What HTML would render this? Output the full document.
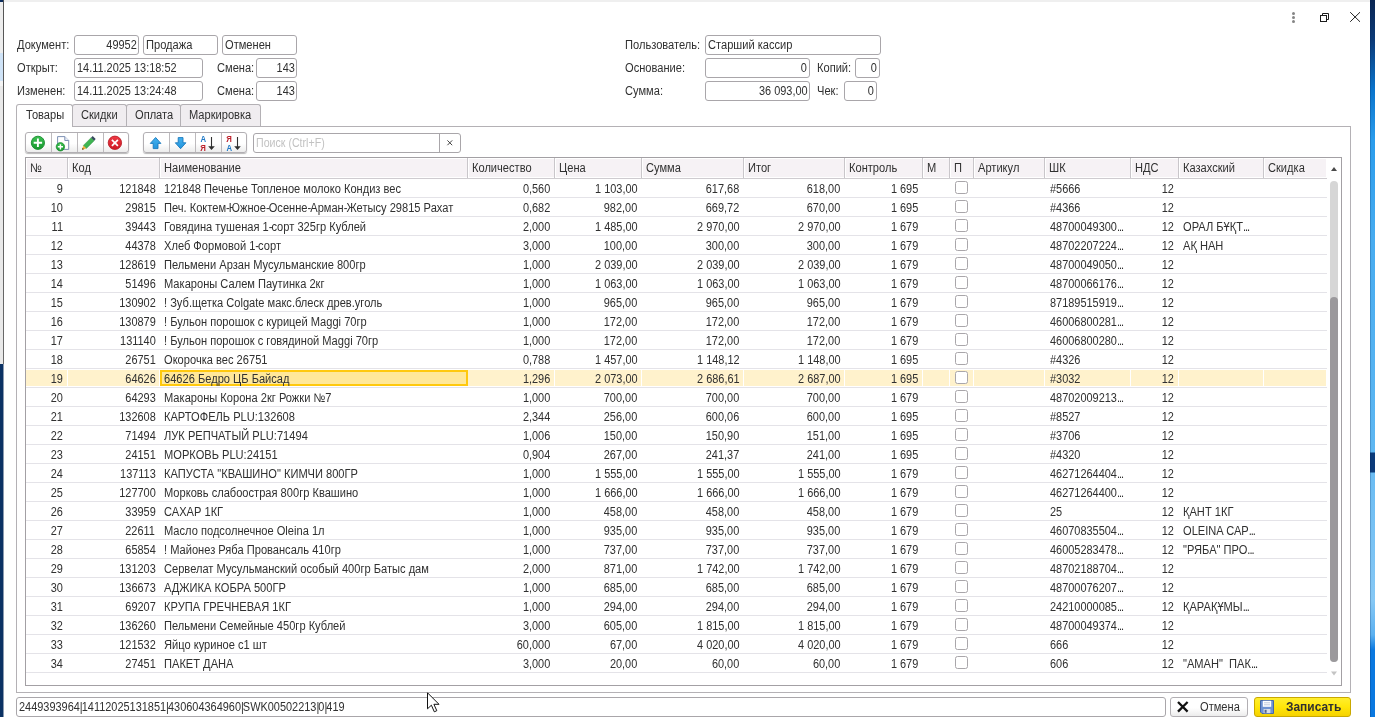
<!DOCTYPE html>
<html lang="ru"><head><meta charset="utf-8"><title>Документ 49952</title>
<style>
html,body{margin:0;padding:0;}
body{width:1375px;height:717px;overflow:hidden;background:#fff;position:relative;
 font-family:"Liberation Sans",sans-serif;font-size:12.5px;color:#303030;}
div,span,svg{position:absolute;box-sizing:border-box;}
.t{display:block;margin-top:0.8px;white-space:pre;line-height:19px;height:19px;transform:scaleX(0.888);}
.l{transform-origin:0 50%;}
.r{transform-origin:100% 50%;transform:scaleX(0.875);}
.inp{border:1px solid #a9a6aa;border-radius:3px;background:#fff;height:20px;}
.tab{top:104px;height:23px;border:1px solid #b4b1b5;border-bottom:none;border-radius:3px 3px 0 0;background:#f0edf0;}
.btng{top:132px;height:21px;border:1px solid #b2afb3;border-radius:3px;background:linear-gradient(#fff 0%,#fff 55%,#ececec 100%);box-shadow:0 1px 1px rgba(0,0,0,.28);}
.bdiv{top:0;width:1px;height:19px;background:#bdbabd;}
.hd{top:159px;height:18px;background:#f6f2f5;}
.hdv{top:158px;width:1px;height:20px;background:#c9c6ca;}
.rl{left:26px;width:1301px;height:1px;background:#e4e3e8;}
.cb{width:13px;height:13px;border:1px solid #a9a6aa;border-radius:2.5px;background:#fff;left:955px;}
.hl{height:16px;background:#fff2cc;}
.ph{color:#c2c2c2;}
.b{font-weight:bold;transform:scaleX(.955);}
.n{transform:scaleX(0.875);}
.e{position:static;letter-spacing:-1.2px;}
.p{position:static;letter-spacing:-1.1px;}
</style></head><body>
<div id="w" style="left:0;top:0;width:1375px;height:717px;will-change:transform">

<div style="left:0;top:0;width:1370px;height:2px;background:#efefef"></div>
<div style="left:0;top:0;width:4px;height:717px;background:linear-gradient(#0c2d5e 0,#0c2d5e 2px,#ededed 2px,#ededed 53px,#cfe3f7 53px,#cfe3f7 81px,#f4f4f4 81px,#f4f4f4 86px,#e9e9e9 86px,#e9e9e9 364px,#0b3264 364px,#0b3264 100%)"></div>
<div style="left:3px;top:0;width:1px;height:717px;background:linear-gradient(#555 0,#6a6a6a 364px,#8b9bb0 364px,#8b9bb0 100%)"></div>
<div style="left:1370px;top:0;width:5px;height:717px;background:linear-gradient(#0a2552 0,#0b3a78 40px,#0a74cc 90px,#2a9cec 140px,#48acf0 240px,#5eb7f2 452px,#0b3a7a 453px,#0b3a7a 472px,#6bbcf3 473px,#86c8f5 600px,#5bb0f0 635px,#0a78e0 650px,#0a78e0 100%)"></div>
<div style="left:1370px;top:0;width:1px;height:717px;background:rgba(0,30,80,.22)"></div>
<svg style="left:1285px;top:8px" width="85" height="20" viewBox="1285 8 85 20"><circle cx="1293.5" cy="13.4" r="1.5" fill="#858585"/><circle cx="1293.5" cy="17.4" r="1.5" fill="#858585"/><circle cx="1293.5" cy="21.4" r="1.5" fill="#858585"/><path d="M1322.5 15v-1.5h6v6h-1.5" fill="none" stroke="#1c1c1c" stroke-width="1"/><rect x="1320.5" y="15.5" width="6" height="6" fill="none" stroke="#1c1c1c" stroke-width="1"/><path d="M1350.2 12.2l9.8 9.6M1360 12.2l-9.8 9.6" stroke="#222" stroke-width="1" fill="none"/></svg>
<span class="t l " style="left:17px;top:35.2px;">Документ:</span>
<div class="inp" style="left:74px;top:35px;width:65px"></div>
<span class="t r " style="right:1238.6px;top:35.2px;">49952</span>
<div class="inp" style="left:143px;top:35px;width:75px"></div>
<span class="t l " style="left:146.2px;top:35.2px;">Продажа</span>
<div class="inp" style="left:222px;top:35px;width:75px"></div>
<span class="t l " style="left:225.2px;top:35.2px;">Отменен</span>
<span class="t l " style="left:17px;top:58.2px;">Открыт:</span>
<div class="inp" style="left:74px;top:58px;width:129px"></div>
<span class="t l n" style="left:77.2px;top:58.2px;">14.11.2025 13:18:52</span>
<span class="t l " style="left:216.6px;top:58.2px;">Смена:</span>
<div class="inp" style="left:256px;top:58px;width:41px"></div>
<span class="t r " style="right:1080.6px;top:58.2px;">143</span>
<span class="t l " style="left:17px;top:81.2px;">Изменен:</span>
<div class="inp" style="left:74px;top:81px;width:129px"></div>
<span class="t l n" style="left:77.2px;top:81.2px;">14.11.2025 13:24:48</span>
<span class="t l " style="left:216.6px;top:81.2px;">Смена:</span>
<div class="inp" style="left:256px;top:81px;width:41px"></div>
<span class="t r " style="right:1080.6px;top:81.2px;">143</span>
<span class="t l " style="left:625px;top:35.2px;">Пользователь:</span>
<div class="inp" style="left:705px;top:35px;width:176px"></div>
<span class="t l " style="left:708.2px;top:35.2px;">Старший кассир</span>
<span class="t l " style="left:625px;top:58.2px;">Основание:</span>
<div class="inp" style="left:705px;top:58px;width:105px"></div>
<span class="t r " style="right:567.6px;top:58.2px;">0</span>
<span class="t l " style="left:817px;top:58.2px;">Копий:</span>
<div class="inp" style="left:855px;top:58px;width:25px"></div>
<span class="t r " style="right:497.6px;top:58.2px;">0</span>
<span class="t l " style="left:625px;top:81.2px;">Сумма:</span>
<div class="inp" style="left:705px;top:81px;width:105px"></div>
<span class="t r " style="right:567.6px;top:81.2px;">36 093,00</span>
<span class="t l " style="left:817px;top:81.2px;">Чек:</span>
<div class="inp" style="left:844px;top:81px;width:33px"></div>
<span class="t r " style="right:500.6px;top:81.2px;">0</span>
<div style="left:16px;top:126px;width:1335px;height:567px;border:1px solid #b4b1b5;background:#fff"></div>
<div class="tab" style="left:72px;width:55px;height:22px"></div>
<span class="t l " style="left:81px;top:105.2px;">Скидки</span>
<div class="tab" style="left:126px;width:55px;height:22px"></div>
<span class="t l " style="left:135px;top:105.2px;">Оплата</span>
<div class="tab" style="left:180px;width:81px;height:22px"></div>
<span class="t l " style="left:189px;top:105.2px;">Маркировка</span>
<div class="tab" style="left:16px;width:57px;background:#fff;height:23px"></div>
<span class="t l " style="left:26px;top:105.2px;">Товары</span>
<div class="btng" style="left:25px;width:104px"><div class="bdiv" style="left:25px"></div><div class="bdiv" style="left:51px"></div><div class="bdiv" style="left:77px"></div></div>
<div class="btng" style="left:143px;width:104px"><div class="bdiv" style="left:25px"></div><div class="bdiv" style="left:51px"></div><div class="bdiv" style="left:77px"></div></div>
<svg style="left:25px;top:132px" width="225" height="22" viewBox="25 132 225 22">
<defs>
<linearGradient id="gg" x1="0" y1="0" x2="0" y2="1"><stop offset="0" stop-color="#3cc052"/><stop offset="1" stop-color="#17992e"/></linearGradient>
<linearGradient id="rg" x1="0" y1="0" x2="0" y2="1"><stop offset="0" stop-color="#ee3a44"/><stop offset="1" stop-color="#cf1824"/></linearGradient>
<linearGradient id="bg" x1="0" y1="0" x2="0" y2="1"><stop offset="0" stop-color="#45b2f0"/><stop offset="1" stop-color="#2294dc"/></linearGradient>
</defs>
<circle cx="37.9" cy="142.8" r="6.6" fill="url(#gg)" stroke="#14882a" stroke-width="0.9"/>
<path d="M37.9 138.6v8.4M33.7 142.8h8.4" stroke="#fff" stroke-width="1.9"/>
<path d="M57.6 136.6h7.2l3.9 3.9v8.9h-11.1z" fill="#fff" stroke="#6f84ab" stroke-width="0.9"/>
<path d="M64.8 136.6v3.9h3.9" fill="#e8edf6" stroke="#6f84ab" stroke-width="0.9"/>
<circle cx="60.4" cy="146.8" r="4.2" fill="url(#gg)" stroke="#14882a" stroke-width="0.7"/>
<path d="M60.4 144.2v5.2M57.8 146.8h5.2" stroke="#fff" stroke-width="1.5"/>
<path d="M83.4 145.4l7.7-7.7 3 3-7.7 7.7z" fill="#3fb552" stroke="#2a8c3c" stroke-width="0.5"/>
<path d="M91.1 137.7l1.6-1.6 3 3-1.6 1.6z" fill="#38495e"/>
<path d="M82 149.8l1.4-4.4 3 3z" fill="#f2b23e"/>
<path d="M82 149.8l0.6-2 1.4 1.4z" fill="#5a3a10"/>
<circle cx="114.9" cy="142.8" r="6.7" fill="url(#rg)" stroke="#b4141e" stroke-width="0.8"/>
<path d="M111.9 139.8l6 6M117.9 139.8l-6 6" stroke="#fff" stroke-width="1.7"/>
<path d="M155.6 137.5l5.3 5.9h-2.9v5.2h-4.8v-5.2h-2.9z" fill="url(#bg)" stroke="#1878bc" stroke-width="0.9" stroke-linejoin="round"/>
<path d="M180.6 148.7l5.3-5.9h-2.9v-5.2h-4.8v5.2h-2.9z" fill="url(#bg)" stroke="#1878bc" stroke-width="0.9" stroke-linejoin="round"/>
<path d="M211.5 137v10" stroke="#303030" stroke-width="1.1"/><path d="M208.2 146.3h6.6l-3.3 3.6z" fill="#303030"/>
<path d="M237.5 137v10" stroke="#303030" stroke-width="1.1"/><path d="M234.2 146.3h6.6l-3.3 3.6z" fill="#303030"/>
<g font-family="Liberation Sans, sans-serif" font-size="9.7" font-weight="bold">
<text transform="translate(200.5 141.8) scale(.8 1)" fill="#1f78c6">А</text>
<text transform="translate(200.3 151) scale(.8 1)" fill="#bc1f2a">Я</text>
<text transform="translate(226.3 141.8) scale(.8 1)" fill="#bc1f2a">Я</text>
<text transform="translate(226.5 151) scale(.8 1)" fill="#1f78c6">А</text>
</g>
</svg>
<div class="inp" style="left:253px;top:133px;width:208px"></div>
<div style="left:439px;top:134px;width:1px;height:18px;background:#a9a6aa"></div>
<span class="t l ph" style="left:256.3px;top:133.2px;transform:scaleX(.85)">Поиск (Ctrl+F)</span>
<svg style="left:445px;top:138px" width="10" height="10" viewBox="0 0 10 10"><path d="M2.4 2.4l4.8 4.8M7.2 2.4L2.4 7.2" stroke="#444" stroke-width="1"/></svg>
<div style="left:25px;top:157px;width:1317px;height:529px;border:1px solid #a3a0a4;background:#fff"></div>
<div class="hd" style="left:27px;width:40px"></div>
<div class="hdv" style="left:67px"></div>
<span class="t l " style="left:30px;top:158.2px;">№</span>
<div class="hd" style="left:69px;width:90px"></div>
<div class="hdv" style="left:159px"></div>
<span class="t l " style="left:72px;top:158.2px;">Код</span>
<div class="hd" style="left:161px;width:306px"></div>
<div class="hdv" style="left:467px"></div>
<span class="t l " style="left:164px;top:158.2px;">Наименование</span>
<div class="hd" style="left:469px;width:85px"></div>
<div class="hdv" style="left:554px"></div>
<span class="t l " style="left:472px;top:158.2px;">Количество</span>
<div class="hd" style="left:556px;width:85px"></div>
<div class="hdv" style="left:641px"></div>
<span class="t l " style="left:559px;top:158.2px;">Цена</span>
<div class="hd" style="left:643px;width:100px"></div>
<div class="hdv" style="left:743px"></div>
<span class="t l " style="left:646px;top:158.2px;">Сумма</span>
<div class="hd" style="left:745px;width:99px"></div>
<div class="hdv" style="left:844px"></div>
<span class="t l " style="left:748px;top:158.2px;">Итог</span>
<div class="hd" style="left:846px;width:76px"></div>
<div class="hdv" style="left:922px"></div>
<span class="t l " style="left:849px;top:158.2px;">Контроль</span>
<div class="hd" style="left:924px;width:25px"></div>
<div class="hdv" style="left:949px"></div>
<span class="t l " style="left:927px;top:158.2px;">М</span>
<div class="hd" style="left:951px;width:22px"></div>
<div class="hdv" style="left:973px"></div>
<span class="t l " style="left:954px;top:158.2px;">П</span>
<div class="hd" style="left:975px;width:69px"></div>
<div class="hdv" style="left:1044px"></div>
<span class="t l " style="left:978px;top:158.2px;">Артикул</span>
<div class="hd" style="left:1046px;width:84px"></div>
<div class="hdv" style="left:1130px"></div>
<span class="t l " style="left:1049px;top:158.2px;">ШК</span>
<div class="hd" style="left:1132px;width:46px"></div>
<div class="hdv" style="left:1178px"></div>
<span class="t l " style="left:1135px;top:158.2px;">НДС</span>
<div class="hd" style="left:1180px;width:83px"></div>
<div class="hdv" style="left:1263px"></div>
<span class="t l " style="left:1183px;top:158.2px;">Казахский</span>
<div class="hd" style="left:1265px;width:61px"></div>
<span class="t l " style="left:1268px;top:158.2px;">Скидка</span>
<div class="rl" style="top:178px;background:#cfccd0"></div>
<svg style="left:1327px;top:160px" width="14" height="524" viewBox="1327 160 14 524"><path d="M1331 171h6l-3-4z" fill="#4a4a4a"/><rect x="1330" y="181" width="8" height="481" rx="4" fill="#d6d6d6"/><rect x="1330" y="297" width="8" height="365" rx="4" fill="#9b999c"/><path d="M1331 671.5h6l-3 4z" fill="#c4c4c4"/></svg>
<div class="rl" style="top:197px"></div>
<span class="t r " style="right:1311.7px;top:179.2px;">9</span>
<span class="t r " style="right:1219.7px;top:179.2px;">121848</span>
<span class="t l " style="left:163.5px;top:179.2px;">121848 Печенье Топленое молоко Кондиз вес</span>
<span class="t r " style="right:824.7px;top:179.2px;">0,560</span>
<span class="t r " style="right:737.7px;top:179.2px;">1 103,00</span>
<span class="t r " style="right:635.7px;top:179.2px;">617,68</span>
<span class="t r " style="right:534.7px;top:179.2px;">618,00</span>
<span class="t r " style="right:456.70000000000005px;top:179.2px;">1 695</span>
<span class="t l n" style="left:1049.5px;top:179.2px;">#5666</span>
<span class="t r " style="right:200.70000000000005px;top:179.2px;">12</span>
<div class="cb" style="top:181px"></div>
<div class="rl" style="top:216px"></div>
<span class="t r " style="right:1311.7px;top:198.2px;">10</span>
<span class="t r " style="right:1219.7px;top:198.2px;">29815</span>
<span class="t l " style="left:163.5px;top:198.2px;">Печ. Коктем<span class="p">-</span>Южное<span class="p">-</span>Осенне<span class="p">-</span>Арман<span class="p">-</span>Жетысу 29815 Рахат</span>
<span class="t r " style="right:824.7px;top:198.2px;">0,682</span>
<span class="t r " style="right:737.7px;top:198.2px;">982,00</span>
<span class="t r " style="right:635.7px;top:198.2px;">669,72</span>
<span class="t r " style="right:534.7px;top:198.2px;">670,00</span>
<span class="t r " style="right:456.70000000000005px;top:198.2px;">1 695</span>
<span class="t l n" style="left:1049.5px;top:198.2px;">#4366</span>
<span class="t r " style="right:200.70000000000005px;top:198.2px;">12</span>
<div class="cb" style="top:200px"></div>
<div class="rl" style="top:235px"></div>
<span class="t r " style="right:1311.7px;top:217.2px;">11</span>
<span class="t r " style="right:1219.7px;top:217.2px;">39443</span>
<span class="t l " style="left:163.5px;top:217.2px;">Говядина тушеная 1<span class="p">-</span>сорт 325гр Кублей</span>
<span class="t r " style="right:824.7px;top:217.2px;">2,000</span>
<span class="t r " style="right:737.7px;top:217.2px;">1 485,00</span>
<span class="t r " style="right:635.7px;top:217.2px;">2 970,00</span>
<span class="t r " style="right:534.7px;top:217.2px;">2 970,00</span>
<span class="t r " style="right:456.70000000000005px;top:217.2px;">1 679</span>
<span class="t l n" style="left:1049.5px;top:217.2px;">48700049300<span class="e">...</span></span>
<span class="t r " style="right:200.70000000000005px;top:217.2px;">12</span>
<span class="t l " style="left:1183px;top:217.2px;">ОРАЛ БҰҚТ<span class="e">...</span></span>
<div class="cb" style="top:219px"></div>
<div class="rl" style="top:254px"></div>
<span class="t r " style="right:1311.7px;top:236.2px;">12</span>
<span class="t r " style="right:1219.7px;top:236.2px;">44378</span>
<span class="t l " style="left:163.5px;top:236.2px;">Хлеб Формовой 1<span class="p">-</span>сорт</span>
<span class="t r " style="right:824.7px;top:236.2px;">3,000</span>
<span class="t r " style="right:737.7px;top:236.2px;">100,00</span>
<span class="t r " style="right:635.7px;top:236.2px;">300,00</span>
<span class="t r " style="right:534.7px;top:236.2px;">300,00</span>
<span class="t r " style="right:456.70000000000005px;top:236.2px;">1 679</span>
<span class="t l n" style="left:1049.5px;top:236.2px;">48702207224<span class="e">...</span></span>
<span class="t r " style="right:200.70000000000005px;top:236.2px;">12</span>
<span class="t l " style="left:1183px;top:236.2px;">АҚ НАН</span>
<div class="cb" style="top:238px"></div>
<div class="rl" style="top:273px"></div>
<span class="t r " style="right:1311.7px;top:255.2px;">13</span>
<span class="t r " style="right:1219.7px;top:255.2px;">128619</span>
<span class="t l " style="left:163.5px;top:255.2px;">Пельмени Арзан Мусульманские 800гр</span>
<span class="t r " style="right:824.7px;top:255.2px;">1,000</span>
<span class="t r " style="right:737.7px;top:255.2px;">2 039,00</span>
<span class="t r " style="right:635.7px;top:255.2px;">2 039,00</span>
<span class="t r " style="right:534.7px;top:255.2px;">2 039,00</span>
<span class="t r " style="right:456.70000000000005px;top:255.2px;">1 679</span>
<span class="t l n" style="left:1049.5px;top:255.2px;">48700049050<span class="e">...</span></span>
<span class="t r " style="right:200.70000000000005px;top:255.2px;">12</span>
<div class="cb" style="top:257px"></div>
<div class="rl" style="top:292px"></div>
<span class="t r " style="right:1311.7px;top:274.2px;">14</span>
<span class="t r " style="right:1219.7px;top:274.2px;">51496</span>
<span class="t l " style="left:163.5px;top:274.2px;">Макароны Салем Паутинка 2кг</span>
<span class="t r " style="right:824.7px;top:274.2px;">1,000</span>
<span class="t r " style="right:737.7px;top:274.2px;">1 063,00</span>
<span class="t r " style="right:635.7px;top:274.2px;">1 063,00</span>
<span class="t r " style="right:534.7px;top:274.2px;">1 063,00</span>
<span class="t r " style="right:456.70000000000005px;top:274.2px;">1 679</span>
<span class="t l n" style="left:1049.5px;top:274.2px;">48700066176<span class="e">...</span></span>
<span class="t r " style="right:200.70000000000005px;top:274.2px;">12</span>
<div class="cb" style="top:276px"></div>
<div class="rl" style="top:311px"></div>
<span class="t r " style="right:1311.7px;top:293.2px;">15</span>
<span class="t r " style="right:1219.7px;top:293.2px;">130902</span>
<span class="t l " style="left:163.5px;top:293.2px;">! Зуб.щетка Colgate макс.блеск древ.уголь</span>
<span class="t r " style="right:824.7px;top:293.2px;">1,000</span>
<span class="t r " style="right:737.7px;top:293.2px;">965,00</span>
<span class="t r " style="right:635.7px;top:293.2px;">965,00</span>
<span class="t r " style="right:534.7px;top:293.2px;">965,00</span>
<span class="t r " style="right:456.70000000000005px;top:293.2px;">1 679</span>
<span class="t l n" style="left:1049.5px;top:293.2px;">87189515919<span class="e">...</span></span>
<span class="t r " style="right:200.70000000000005px;top:293.2px;">12</span>
<div class="cb" style="top:295px"></div>
<div class="rl" style="top:330px"></div>
<span class="t r " style="right:1311.7px;top:312.2px;">16</span>
<span class="t r " style="right:1219.7px;top:312.2px;">130879</span>
<span class="t l " style="left:163.5px;top:312.2px;">! Бульон порошок с курицей Maggi 70гр</span>
<span class="t r " style="right:824.7px;top:312.2px;">1,000</span>
<span class="t r " style="right:737.7px;top:312.2px;">172,00</span>
<span class="t r " style="right:635.7px;top:312.2px;">172,00</span>
<span class="t r " style="right:534.7px;top:312.2px;">172,00</span>
<span class="t r " style="right:456.70000000000005px;top:312.2px;">1 679</span>
<span class="t l n" style="left:1049.5px;top:312.2px;">46006800281<span class="e">...</span></span>
<span class="t r " style="right:200.70000000000005px;top:312.2px;">12</span>
<div class="cb" style="top:314px"></div>
<div class="rl" style="top:349px"></div>
<span class="t r " style="right:1311.7px;top:331.2px;">17</span>
<span class="t r " style="right:1219.7px;top:331.2px;">131140</span>
<span class="t l " style="left:163.5px;top:331.2px;">! Бульон порошок с говядиной Maggi 70гр</span>
<span class="t r " style="right:824.7px;top:331.2px;">1,000</span>
<span class="t r " style="right:737.7px;top:331.2px;">172,00</span>
<span class="t r " style="right:635.7px;top:331.2px;">172,00</span>
<span class="t r " style="right:534.7px;top:331.2px;">172,00</span>
<span class="t r " style="right:456.70000000000005px;top:331.2px;">1 679</span>
<span class="t l n" style="left:1049.5px;top:331.2px;">46006800280<span class="e">...</span></span>
<span class="t r " style="right:200.70000000000005px;top:331.2px;">12</span>
<div class="cb" style="top:333px"></div>
<div class="rl" style="top:368px"></div>
<span class="t r " style="right:1311.7px;top:350.2px;">18</span>
<span class="t r " style="right:1219.7px;top:350.2px;">26751</span>
<span class="t l " style="left:163.5px;top:350.2px;">Окорочка вес 26751</span>
<span class="t r " style="right:824.7px;top:350.2px;">0,788</span>
<span class="t r " style="right:737.7px;top:350.2px;">1 457,00</span>
<span class="t r " style="right:635.7px;top:350.2px;">1 148,12</span>
<span class="t r " style="right:534.7px;top:350.2px;">1 148,00</span>
<span class="t r " style="right:456.70000000000005px;top:350.2px;">1 695</span>
<span class="t l n" style="left:1049.5px;top:350.2px;">#4326</span>
<span class="t r " style="right:200.70000000000005px;top:350.2px;">12</span>
<div class="cb" style="top:352px"></div>
<div class="rl" style="top:387px"></div>
<div class="hl" style="left:26px;top:370px;width:41px"></div>
<div class="hl" style="left:68px;top:370px;width:91px"></div>
<div style="left:160px;top:370px;width:308px;height:16px;background:#ffe89a;border:2px solid #ffc90e"></div>
<div class="hl" style="left:468px;top:370px;width:86px"></div>
<div class="hl" style="left:555px;top:370px;width:86px"></div>
<div class="hl" style="left:642px;top:370px;width:101px"></div>
<div class="hl" style="left:744px;top:370px;width:100px"></div>
<div class="hl" style="left:845px;top:370px;width:77px"></div>
<div class="hl" style="left:923px;top:370px;width:26px"></div>
<div class="hl" style="left:950px;top:370px;width:23px"></div>
<div class="hl" style="left:974px;top:370px;width:70px"></div>
<div class="hl" style="left:1045px;top:370px;width:85px"></div>
<div class="hl" style="left:1131px;top:370px;width:47px"></div>
<div class="hl" style="left:1179px;top:370px;width:84px"></div>
<div class="hl" style="left:1264px;top:370px;width:62px"></div>
<span class="t r " style="right:1311.7px;top:369.2px;">19</span>
<span class="t r " style="right:1219.7px;top:369.2px;">64626</span>
<span class="t l " style="left:163.5px;top:369.2px;">64626 Бедро ЦБ Байсад</span>
<span class="t r " style="right:824.7px;top:369.2px;">1,296</span>
<span class="t r " style="right:737.7px;top:369.2px;">2 073,00</span>
<span class="t r " style="right:635.7px;top:369.2px;">2 686,61</span>
<span class="t r " style="right:534.7px;top:369.2px;">2 687,00</span>
<span class="t r " style="right:456.70000000000005px;top:369.2px;">1 695</span>
<span class="t l n" style="left:1049.5px;top:369.2px;">#3032</span>
<span class="t r " style="right:200.70000000000005px;top:369.2px;">12</span>
<div class="cb" style="top:371px"></div>
<div class="rl" style="top:406px"></div>
<span class="t r " style="right:1311.7px;top:388.2px;">20</span>
<span class="t r " style="right:1219.7px;top:388.2px;">64293</span>
<span class="t l " style="left:163.5px;top:388.2px;">Макароны Корона 2кг Рожки №7</span>
<span class="t r " style="right:824.7px;top:388.2px;">1,000</span>
<span class="t r " style="right:737.7px;top:388.2px;">700,00</span>
<span class="t r " style="right:635.7px;top:388.2px;">700,00</span>
<span class="t r " style="right:534.7px;top:388.2px;">700,00</span>
<span class="t r " style="right:456.70000000000005px;top:388.2px;">1 679</span>
<span class="t l n" style="left:1049.5px;top:388.2px;">48702009213<span class="e">...</span></span>
<span class="t r " style="right:200.70000000000005px;top:388.2px;">12</span>
<div class="cb" style="top:390px"></div>
<div class="rl" style="top:425px"></div>
<span class="t r " style="right:1311.7px;top:407.2px;">21</span>
<span class="t r " style="right:1219.7px;top:407.2px;">132608</span>
<span class="t l " style="left:163.5px;top:407.2px;">КАРТОФЕЛЬ PLU:132608</span>
<span class="t r " style="right:824.7px;top:407.2px;">2,344</span>
<span class="t r " style="right:737.7px;top:407.2px;">256,00</span>
<span class="t r " style="right:635.7px;top:407.2px;">600,06</span>
<span class="t r " style="right:534.7px;top:407.2px;">600,00</span>
<span class="t r " style="right:456.70000000000005px;top:407.2px;">1 695</span>
<span class="t l n" style="left:1049.5px;top:407.2px;">#8527</span>
<span class="t r " style="right:200.70000000000005px;top:407.2px;">12</span>
<div class="cb" style="top:409px"></div>
<div class="rl" style="top:444px"></div>
<span class="t r " style="right:1311.7px;top:426.2px;">22</span>
<span class="t r " style="right:1219.7px;top:426.2px;">71494</span>
<span class="t l " style="left:163.5px;top:426.2px;">ЛУК РЕПЧАТЫЙ PLU:71494</span>
<span class="t r " style="right:824.7px;top:426.2px;">1,006</span>
<span class="t r " style="right:737.7px;top:426.2px;">150,00</span>
<span class="t r " style="right:635.7px;top:426.2px;">150,90</span>
<span class="t r " style="right:534.7px;top:426.2px;">151,00</span>
<span class="t r " style="right:456.70000000000005px;top:426.2px;">1 695</span>
<span class="t l n" style="left:1049.5px;top:426.2px;">#3706</span>
<span class="t r " style="right:200.70000000000005px;top:426.2px;">12</span>
<div class="cb" style="top:428px"></div>
<div class="rl" style="top:463px"></div>
<span class="t r " style="right:1311.7px;top:445.2px;">23</span>
<span class="t r " style="right:1219.7px;top:445.2px;">24151</span>
<span class="t l " style="left:163.5px;top:445.2px;">МОРКОВЬ PLU:24151</span>
<span class="t r " style="right:824.7px;top:445.2px;">0,904</span>
<span class="t r " style="right:737.7px;top:445.2px;">267,00</span>
<span class="t r " style="right:635.7px;top:445.2px;">241,37</span>
<span class="t r " style="right:534.7px;top:445.2px;">241,00</span>
<span class="t r " style="right:456.70000000000005px;top:445.2px;">1 695</span>
<span class="t l n" style="left:1049.5px;top:445.2px;">#4320</span>
<span class="t r " style="right:200.70000000000005px;top:445.2px;">12</span>
<div class="cb" style="top:447px"></div>
<div class="rl" style="top:482px"></div>
<span class="t r " style="right:1311.7px;top:464.2px;">24</span>
<span class="t r " style="right:1219.7px;top:464.2px;">137113</span>
<span class="t l " style="left:163.5px;top:464.2px;">КАПУСТА "КВАШИНО" КИМЧИ 800ГР</span>
<span class="t r " style="right:824.7px;top:464.2px;">1,000</span>
<span class="t r " style="right:737.7px;top:464.2px;">1 555,00</span>
<span class="t r " style="right:635.7px;top:464.2px;">1 555,00</span>
<span class="t r " style="right:534.7px;top:464.2px;">1 555,00</span>
<span class="t r " style="right:456.70000000000005px;top:464.2px;">1 679</span>
<span class="t l n" style="left:1049.5px;top:464.2px;">46271264404<span class="e">...</span></span>
<span class="t r " style="right:200.70000000000005px;top:464.2px;">12</span>
<div class="cb" style="top:466px"></div>
<div class="rl" style="top:501px"></div>
<span class="t r " style="right:1311.7px;top:483.2px;">25</span>
<span class="t r " style="right:1219.7px;top:483.2px;">127700</span>
<span class="t l " style="left:163.5px;top:483.2px;">Морковь слабоострая 800гр Квашино</span>
<span class="t r " style="right:824.7px;top:483.2px;">1,000</span>
<span class="t r " style="right:737.7px;top:483.2px;">1 666,00</span>
<span class="t r " style="right:635.7px;top:483.2px;">1 666,00</span>
<span class="t r " style="right:534.7px;top:483.2px;">1 666,00</span>
<span class="t r " style="right:456.70000000000005px;top:483.2px;">1 679</span>
<span class="t l n" style="left:1049.5px;top:483.2px;">46271264400<span class="e">...</span></span>
<span class="t r " style="right:200.70000000000005px;top:483.2px;">12</span>
<div class="cb" style="top:485px"></div>
<div class="rl" style="top:520px"></div>
<span class="t r " style="right:1311.7px;top:502.2px;">26</span>
<span class="t r " style="right:1219.7px;top:502.2px;">33959</span>
<span class="t l " style="left:163.5px;top:502.2px;">САХАР 1КГ</span>
<span class="t r " style="right:824.7px;top:502.2px;">1,000</span>
<span class="t r " style="right:737.7px;top:502.2px;">458,00</span>
<span class="t r " style="right:635.7px;top:502.2px;">458,00</span>
<span class="t r " style="right:534.7px;top:502.2px;">458,00</span>
<span class="t r " style="right:456.70000000000005px;top:502.2px;">1 679</span>
<span class="t l n" style="left:1049.5px;top:502.2px;">25</span>
<span class="t r " style="right:200.70000000000005px;top:502.2px;">12</span>
<span class="t l " style="left:1183px;top:502.2px;">ҚАНТ 1КГ</span>
<div class="cb" style="top:504px"></div>
<div class="rl" style="top:539px"></div>
<span class="t r " style="right:1311.7px;top:521.2px;">27</span>
<span class="t r " style="right:1219.7px;top:521.2px;">22611</span>
<span class="t l " style="left:163.5px;top:521.2px;">Масло подсолнечное Oleina 1л</span>
<span class="t r " style="right:824.7px;top:521.2px;">1,000</span>
<span class="t r " style="right:737.7px;top:521.2px;">935,00</span>
<span class="t r " style="right:635.7px;top:521.2px;">935,00</span>
<span class="t r " style="right:534.7px;top:521.2px;">935,00</span>
<span class="t r " style="right:456.70000000000005px;top:521.2px;">1 679</span>
<span class="t l n" style="left:1049.5px;top:521.2px;">46070835504<span class="e">...</span></span>
<span class="t r " style="right:200.70000000000005px;top:521.2px;">12</span>
<span class="t l " style="left:1183px;top:521.2px;">OLEINA САР<span class="e">...</span></span>
<div class="cb" style="top:523px"></div>
<div class="rl" style="top:558px"></div>
<span class="t r " style="right:1311.7px;top:540.2px;">28</span>
<span class="t r " style="right:1219.7px;top:540.2px;">65854</span>
<span class="t l " style="left:163.5px;top:540.2px;">! Майонез Ряба Провансаль 410гр</span>
<span class="t r " style="right:824.7px;top:540.2px;">1,000</span>
<span class="t r " style="right:737.7px;top:540.2px;">737,00</span>
<span class="t r " style="right:635.7px;top:540.2px;">737,00</span>
<span class="t r " style="right:534.7px;top:540.2px;">737,00</span>
<span class="t r " style="right:456.70000000000005px;top:540.2px;">1 679</span>
<span class="t l n" style="left:1049.5px;top:540.2px;">46005283478<span class="e">...</span></span>
<span class="t r " style="right:200.70000000000005px;top:540.2px;">12</span>
<span class="t l " style="left:1183px;top:540.2px;">"РЯБА" ПРО<span class="e">...</span></span>
<div class="cb" style="top:542px"></div>
<div class="rl" style="top:577px"></div>
<span class="t r " style="right:1311.7px;top:559.2px;">29</span>
<span class="t r " style="right:1219.7px;top:559.2px;">131203</span>
<span class="t l " style="left:163.5px;top:559.2px;">Сервелат Мусульманский особый 400гр Батыс дам</span>
<span class="t r " style="right:824.7px;top:559.2px;">2,000</span>
<span class="t r " style="right:737.7px;top:559.2px;">871,00</span>
<span class="t r " style="right:635.7px;top:559.2px;">1 742,00</span>
<span class="t r " style="right:534.7px;top:559.2px;">1 742,00</span>
<span class="t r " style="right:456.70000000000005px;top:559.2px;">1 679</span>
<span class="t l n" style="left:1049.5px;top:559.2px;">48702188704<span class="e">...</span></span>
<span class="t r " style="right:200.70000000000005px;top:559.2px;">12</span>
<div class="cb" style="top:561px"></div>
<div class="rl" style="top:596px"></div>
<span class="t r " style="right:1311.7px;top:578.2px;">30</span>
<span class="t r " style="right:1219.7px;top:578.2px;">136673</span>
<span class="t l " style="left:163.5px;top:578.2px;">АДЖИКА КОБРА 500ГР</span>
<span class="t r " style="right:824.7px;top:578.2px;">1,000</span>
<span class="t r " style="right:737.7px;top:578.2px;">685,00</span>
<span class="t r " style="right:635.7px;top:578.2px;">685,00</span>
<span class="t r " style="right:534.7px;top:578.2px;">685,00</span>
<span class="t r " style="right:456.70000000000005px;top:578.2px;">1 679</span>
<span class="t l n" style="left:1049.5px;top:578.2px;">48700076207<span class="e">...</span></span>
<span class="t r " style="right:200.70000000000005px;top:578.2px;">12</span>
<div class="cb" style="top:580px"></div>
<div class="rl" style="top:615px"></div>
<span class="t r " style="right:1311.7px;top:597.2px;">31</span>
<span class="t r " style="right:1219.7px;top:597.2px;">69207</span>
<span class="t l " style="left:163.5px;top:597.2px;">КРУПА ГРЕЧНЕВАЯ 1КГ</span>
<span class="t r " style="right:824.7px;top:597.2px;">1,000</span>
<span class="t r " style="right:737.7px;top:597.2px;">294,00</span>
<span class="t r " style="right:635.7px;top:597.2px;">294,00</span>
<span class="t r " style="right:534.7px;top:597.2px;">294,00</span>
<span class="t r " style="right:456.70000000000005px;top:597.2px;">1 679</span>
<span class="t l n" style="left:1049.5px;top:597.2px;">24210000085<span class="e">...</span></span>
<span class="t r " style="right:200.70000000000005px;top:597.2px;">12</span>
<span class="t l " style="left:1183px;top:597.2px;">ҚАРАҚҰМЫ<span class="e">...</span></span>
<div class="cb" style="top:599px"></div>
<div class="rl" style="top:634px"></div>
<span class="t r " style="right:1311.7px;top:616.2px;">32</span>
<span class="t r " style="right:1219.7px;top:616.2px;">136260</span>
<span class="t l " style="left:163.5px;top:616.2px;">Пельмени Семейные 450гр Кублей</span>
<span class="t r " style="right:824.7px;top:616.2px;">3,000</span>
<span class="t r " style="right:737.7px;top:616.2px;">605,00</span>
<span class="t r " style="right:635.7px;top:616.2px;">1 815,00</span>
<span class="t r " style="right:534.7px;top:616.2px;">1 815,00</span>
<span class="t r " style="right:456.70000000000005px;top:616.2px;">1 679</span>
<span class="t l n" style="left:1049.5px;top:616.2px;">48700049374<span class="e">...</span></span>
<span class="t r " style="right:200.70000000000005px;top:616.2px;">12</span>
<div class="cb" style="top:618px"></div>
<div class="rl" style="top:653px"></div>
<span class="t r " style="right:1311.7px;top:635.2px;">33</span>
<span class="t r " style="right:1219.7px;top:635.2px;">121532</span>
<span class="t l " style="left:163.5px;top:635.2px;">Яйцо куриное с1 шт</span>
<span class="t r " style="right:824.7px;top:635.2px;">60,000</span>
<span class="t r " style="right:737.7px;top:635.2px;">67,00</span>
<span class="t r " style="right:635.7px;top:635.2px;">4 020,00</span>
<span class="t r " style="right:534.7px;top:635.2px;">4 020,00</span>
<span class="t r " style="right:456.70000000000005px;top:635.2px;">1 679</span>
<span class="t l n" style="left:1049.5px;top:635.2px;">666</span>
<span class="t r " style="right:200.70000000000005px;top:635.2px;">12</span>
<div class="cb" style="top:637px"></div>
<div class="rl" style="top:672px"></div>
<span class="t r " style="right:1311.7px;top:654.2px;">34</span>
<span class="t r " style="right:1219.7px;top:654.2px;">27451</span>
<span class="t l " style="left:163.5px;top:654.2px;">ПАКЕТ ДАНА</span>
<span class="t r " style="right:824.7px;top:654.2px;">3,000</span>
<span class="t r " style="right:737.7px;top:654.2px;">20,00</span>
<span class="t r " style="right:635.7px;top:654.2px;">60,00</span>
<span class="t r " style="right:534.7px;top:654.2px;">60,00</span>
<span class="t r " style="right:456.70000000000005px;top:654.2px;">1 679</span>
<span class="t l n" style="left:1049.5px;top:654.2px;">606</span>
<span class="t r " style="right:200.70000000000005px;top:654.2px;">12</span>
<span class="t l " style="left:1183px;top:654.2px;">"АМАН"  ПАК<span class="e">...</span></span>
<div class="cb" style="top:656px"></div>
<div class="inp" style="left:16px;top:697px;width:1150px"></div>
<span class="t l n" style="left:19px;top:697.2px;">2449393964<span class="p">|</span>14112025131851<span class="p">|</span>430604364960<span class="p">|</span>SWK00502213<span class="p">|</span>0<span class="p">|</span>419</span>
<div style="left:1170px;top:697px;width:78px;height:20px;border:1px solid #b2afb3;border-radius:3px;background:linear-gradient(#fff 0%,#fff 55%,#ececec 100%)"></div>
<svg style="left:1176px;top:701px" width="14" height="12" viewBox="0 0 14 12"><path d="M2 1l9.6 9.6M11.6 1L2 10.6" stroke="#111" stroke-width="2.3"/></svg>
<span class="t l " style="left:1199.5px;top:697.2px;">Отмена</span>
<div style="left:1254px;top:697px;width:97px;height:20px;border:1px solid #c9a800;border-radius:3px;background:linear-gradient(#ffee2e 0%,#ffe60a 50%,#f6d200 100%)"></div>
<svg style="left:1260px;top:700px" width="14" height="14" viewBox="0 0 14 14">
<path d="M0.5 0.5h13v13h-11.5l-1.5-1.5z" fill="#6f93d2" stroke="#4668a8" stroke-width="1"/>
<rect x="2.8" y="0.8" width="8.4" height="6" fill="#fff"/>
<path d="M4 2.8h6M4 4.8h6" stroke="#b8c4da" stroke-width="0.9"/>
<rect x="3.6" y="9" width="6.8" height="4.2" fill="#d8dde8"/>
<rect x="4.6" y="9.8" width="2" height="3" fill="#54688a"/>
</svg>
<span class="t l b" style="left:1286px;top:697.2px;">Записать</span>
<svg style="left:426px;top:691px" width="15" height="22" viewBox="-1 -1 15 22"><path d="M0.5 0.8v16l3.9-3.6 2.9 6.6 2.5-1.1-2.9-6.4h5.1z" fill="#fff" stroke="#111" stroke-width="1" stroke-linejoin="miter"/></svg>
</div></body></html>
